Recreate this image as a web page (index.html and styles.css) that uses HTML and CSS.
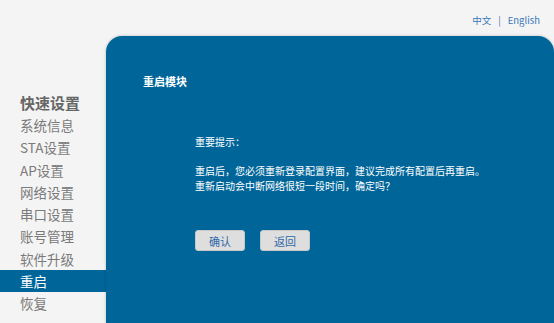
FILE: index.html
```html
<!DOCTYPE html>
<html lang="zh-CN">
<head>
    <meta charset="UTF-8">
    <meta name="viewport" content="width=device-width, initial-scale=1.0">
    <title>重启模块</title>
    <link rel="stylesheet" href="styles.css">
</head>
<body>
    <div class="topbar">
        <a href="#" class="lang">中文</a>
        <span class="sep">|</span>
        <a href="#" class="lang">English</a>
    </div>

    <div class="main">
        <div class="sidebar">
            <div class="menu-title">快速设置</div>
            <div class="menu-item">系统信息</div>
            <div class="menu-item">STA设置</div>
            <div class="menu-item">AP设置</div>
            <div class="menu-item">网络设置</div>
            <div class="menu-item">串口设置</div>
            <div class="menu-item">账号管理</div>
            <div class="menu-item">软件升级</div>
            <div class="menu-item active">重启</div>
            <div class="menu-item">恢复</div>
        </div>

        <div class="panel">
            <div class="panel-title">重启模块</div>
            <div class="notice">
                <div class="notice-head">重要提示：</div>
                <div class="notice-text">
                    重启后，您必须重新登录配置界面，建议完成所有配置后再重启。<br>
                    重新启动会中断网络很短一段时间，确定吗？
                </div>
                <div class="buttons">
                    <button id="okBtn">确认</button>
                    <button id="backBtn">返回</button>
                </div>
            </div>
        </div>
    </div>
</body>
</html>
```

FILE: styles.css
```css
body {
    margin: 0;
    background-color: #f4f4f4;
    font-family: "Noto Sans CJK SC", "Liberation Sans", sans-serif;
    overflow: hidden;
}
.topbar {
    height: 36px;
    display: flex;
    align-items: center;
    justify-content: flex-end;
    padding-right: 14px;
    font-size: 9.5px;
    color: #3a78b8;
    box-sizing: border-box;
    padding-top: 3px;
}
.lang {
    color: #3a78b8;
    text-decoration: none;
}
.sep {
    margin: 0 7px;
    color: #3a78b8;
}
.main {
    display: flex;
    height: 287px;
}
.sidebar {
    width: 106px;
    flex-shrink: 0;
    padding-top: 56px;
}
.menu-title {
    padding-left: 20px;
    font-size: 15px;
    font-weight: bold;
    color: #666;
    line-height: 22px;
}
.menu-item {
    padding-left: 20px;
    font-size: 13.5px;
    color: #7a7a7a;
    line-height: 22.25px;
    height: 22.25px;
}
.menu-item.active {
    background-color: #006699;
    color: #fff;
}
.panel {
    flex: 1;
    background-color: #006699;
    border-radius: 16px 16px 0 0;
    box-shadow: 0 0 3px rgba(0, 0, 0, 0.25);
    padding: 37px 0 0 37px;
    color: #fff;
}
.panel-title {
    font-size: 11px;
    font-weight: bold;
    line-height: 16px;
}
.notice {
    margin-left: 52px;
    margin-top: 46px;
    font-size: 10px;
}
.notice-head {
    line-height: 14px;
    margin-bottom: 15px;
}
.notice-text {
    line-height: 14.5px;
}
.buttons {
    display: flex;
    gap: 15px;
    margin-top: 37px;
}
button {
    width: 50px;
    height: 21px;
    padding: 0;
    background-color: #dedede;
    border: 1px solid #c8c8c8;
    border-radius: 3px;
    color: #2f6aa8;
    font-family: "Noto Sans CJK SC", sans-serif;
    font-size: 11px;
    cursor: pointer;
}
```
